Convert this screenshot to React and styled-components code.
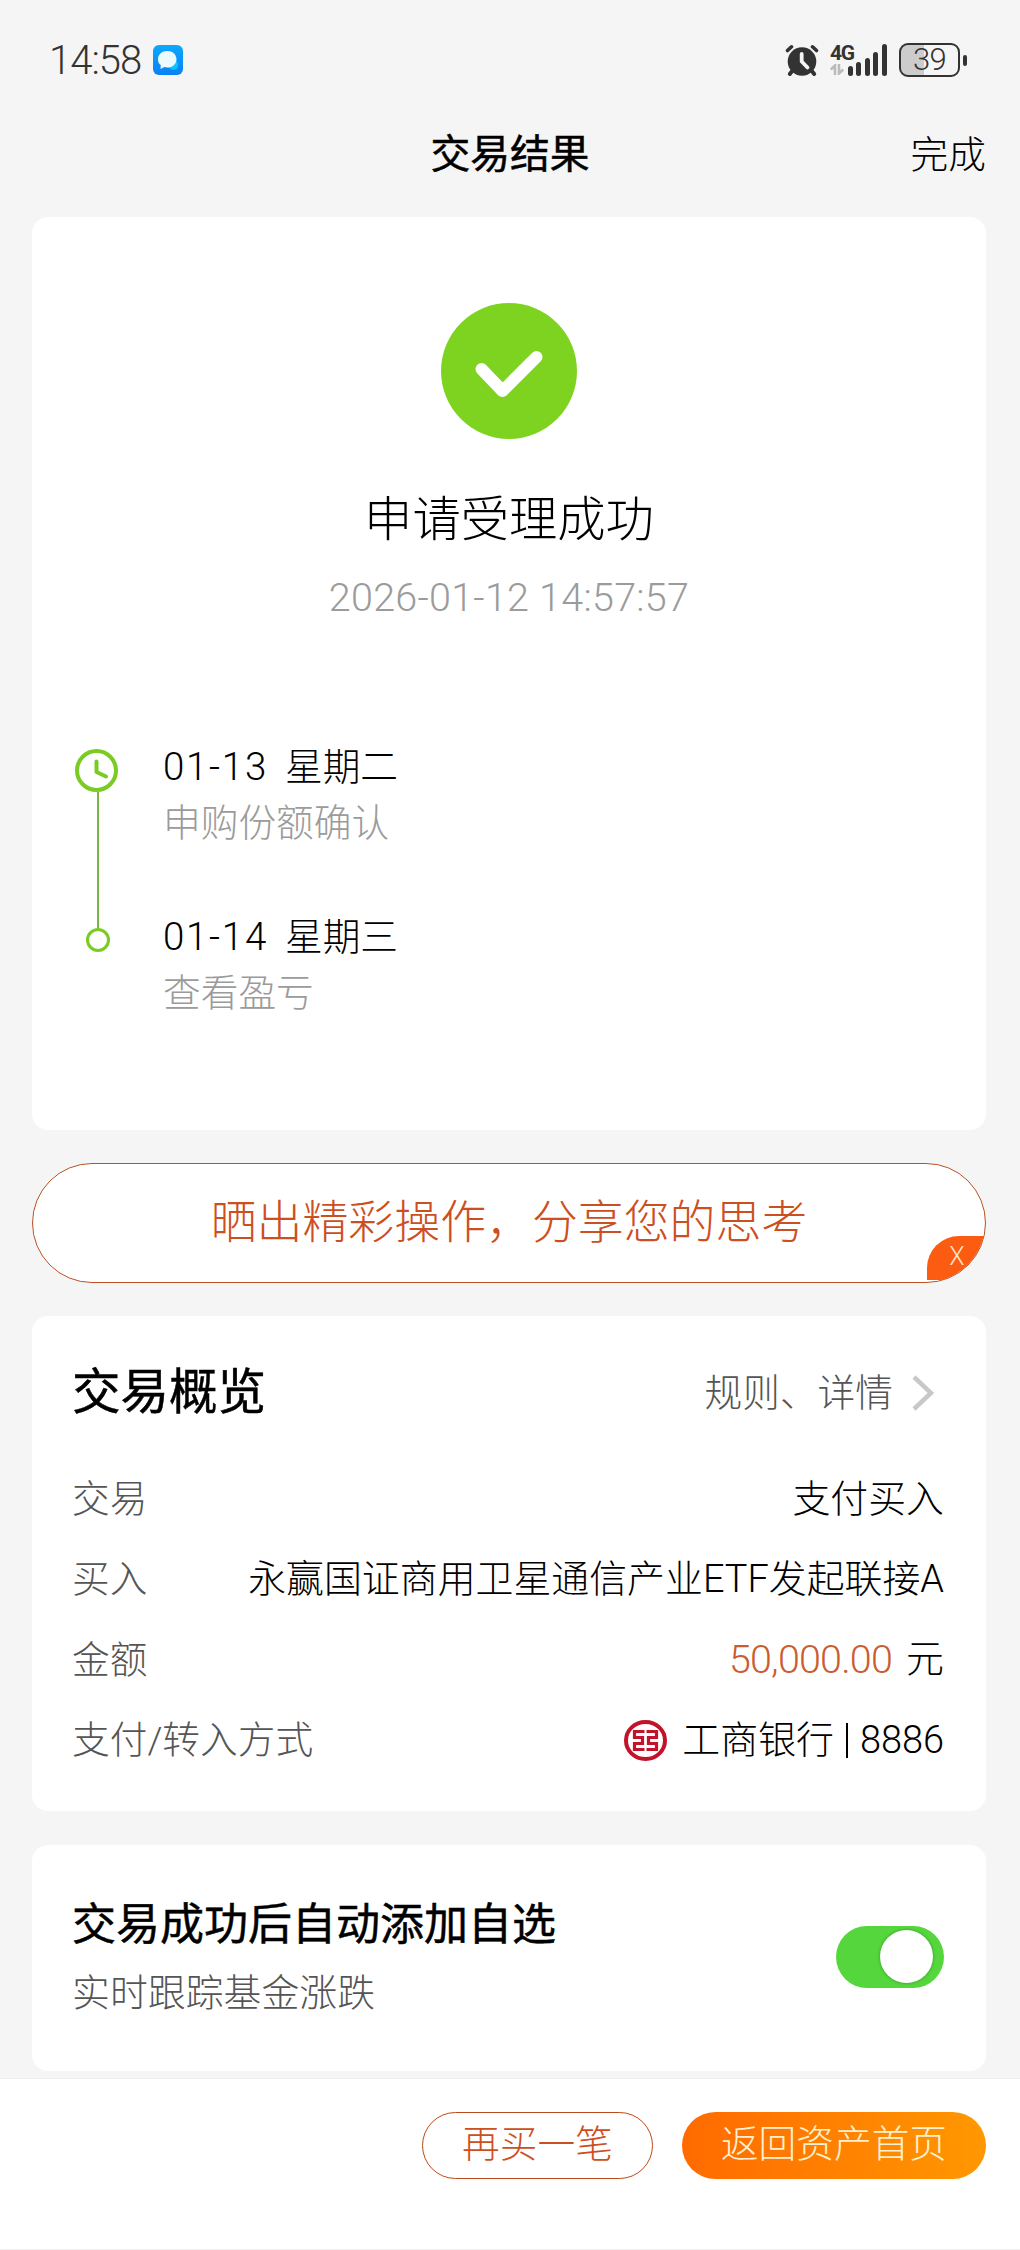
import React from 'react'
import styled, { createGlobalStyle } from 'styled-components'

const GlobalStyle = createGlobalStyle`
  * {
    box-sizing: border-box;
  }
  body {
    margin: 0;
    background: #f5f5f5;
    color: #000;
    font-family: Roboto, 'Noto Sans CJK SC', sans-serif;
    font-weight: 300;
    font-size: 37.7px;
    line-height: 1.4;
  }
`

const Page = styled.div`
  width: 1020px;
  height: 2250px;
  overflow: hidden;
  display: flex;
  flex-direction: column;
`

const StatusBar = styled.div`
  height: 117px;
  padding: 3px 53px 0 49px;
  display: flex;
  align-items: center;
  justify-content: space-between;
  color: #333;
`

const StatusGroup = styled.div`
  display: flex;
  align-items: center;
  gap: ${({ $gap }) => $gap || 0}px;
`

const Clock = styled.span`
  width: 93px;
  padding-top: 1px;
  font-size: 40px;
  line-height: 48px;
  letter-spacing: -1px;
  white-space: nowrap;
`

const Network = styled.div`
  display: flex;
  flex-direction: column;
  width: 22px;
  height: 33px;
  margin-left: 11px;
`

const NetworkLabel = styled.span`
  font-weight: 700;
  font-size: 21px;
  line-height: 18px;
  height: 20px;
  letter-spacing: -1.5px;
`

const Bars = styled.div`
  display: flex;
  align-items: flex-end;
  gap: 3.4px;
  height: 32px;
  margin-left: -4.6px;
`

const Bar = styled.span`
  width: 5.2px;
  height: ${({ $h }) => $h}px;
  border-radius: 3px;
  background: #333;
`

const Battery = styled.div`
  width: 61px;
  height: 34px;
  margin-left: 12px;
  border: 2px solid #333;
  border-radius: 9px;
  background: linear-gradient(90deg, #ccc 23px, transparent 23px);
  display: flex;
  align-items: center;
  justify-content: center;
  font-size: 31px;
  line-height: 30px;
  letter-spacing: -0.8px;
`

const BatteryTip = styled.span`
  width: 4px;
  height: 11px;
  margin-left: 3px;
  border-radius: 2px;
  background: #333;
`

const Header = styled.header`
  height: 100px;
  padding: 0 34px;
  display: grid;
  grid-template-columns: 1fr auto 1fr;
  align-items: start;
`

const HeaderTitle = styled.h1`
  grid-column: 2;
  margin: 0;
  font-size: 39.8px;
  font-weight: 400;
  -webkit-text-stroke: 0.5px #000;
  line-height: 75px;
`

const HeaderAction = styled.span`
  justify-self: end;
  line-height: 77px;
`

const Card = styled.section`
  margin: 0 34px 0 32px;
  height: ${({ $h }) => $h}px;
  flex: none;
  border-radius: 16px;
  background: #fff;
`

const ResultCard = styled(Card)`
  display: flex;
  flex-direction: column;
  align-items: center;
  padding-top: 86px;
`

const ResultText = styled.div`
  margin-top: 45px;
  font-size: 48.3px;
  line-height: 72px;
`

const ResultTime = styled.div`
  margin-top: 14px;
  font-size: 39.5px;
  line-height: 56px;
  letter-spacing: 0.25px;
  color: #9b9b9b;
`

const Timeline = styled.div`
  align-self: stretch;
  display: flex;
  margin-top: 113px;
  padding-left: 42px;
`

const Track = styled.svg`
  margin-top: 7px;
`

const Steps = styled.div`
  display: flex;
  flex-direction: column;
  gap: 58px;
  margin-left: 43px;
`

const Step = styled.div`
  line-height: 56px;
`

const StepDate = styled.div`
  display: flex;
  gap: 17px;
`

const Day = styled.span`
  font-size: 38.5px;
  letter-spacing: 1.7px;
`

const StepNote = styled.div`
  color: #9b9b9b;
`

const ShareBanner = styled.div`
  position: relative;
  overflow: hidden;
  flex: none;
  height: 120px;
  margin: 33px 34px 33px 32px;
  padding-bottom: 2px;
  border: 1px solid #bb5123;
  border-radius: 60px;
  background: #fff;
  color: #cc4f22;
  font-size: 45.9px;
  display: flex;
  align-items: center;
  justify-content: center;
`

const CloseBadge = styled.span`
  position: absolute;
  right: 0;
  bottom: 2px;
  width: 58px;
  height: 44px;
  padding-left: 2px;
  border-top-left-radius: 32px;
  background: #fb5c12;
  color: #ffe3c8;
  font-size: 25px;
  line-height: 42px;
  text-align: center;
`

const OverviewCard = styled(Card)`
  padding: 37px 42px 0 40px;
`

const OverviewHead = styled.div`
  display: flex;
  justify-content: space-between;
  align-items: center;
  height: 80px;
  margin-bottom: 26px;
`

const CardTitle = styled.h2`
  margin: 0;
  font-weight: 400;
  -webkit-text-stroke: 0.5px #000;
  font-size: ${({ $size }) => $size}px;
  line-height: 64px;
`

const DetailLink = styled.div`
  display: flex;
  align-items: center;
  gap: 19px;
  padding-right: 10px;
  color: #555;
`

const Row = styled.div`
  display: flex;
  justify-content: space-between;
  align-items: center;
  height: 80.4px;
  white-space: nowrap;
`

const Label = styled.span`
  color: #555;
`

const Value = styled.span`
  display: flex;
  align-items: center;
  font-size: 37.9px;
`

const Amount = styled.span`
  margin-right: 14px;
  color: #cc5c2e;
  font-size: 39.5px;
  letter-spacing: -0.8px;
`

const BankName = styled.span`
  margin-left: 15px;
`

const Divider = styled.span`
  width: 2px;
  height: 35px;
  margin: 0 12px;
  background: #000;
`

const WatchCard = styled(Card)`
  margin-top: 34px;
  padding: 0 42px 3px 40px;
  display: flex;
  justify-content: space-between;
  align-items: center;
`

const WatchText = styled.div`
  display: flex;
  flex-direction: column;
  gap: 8px;
  padding-top: 5px;
  line-height: 60px;
  font-size: 37.9px;
  color: #555;

  h2 {
    color: #000;
    line-height: 60px;
  }
`

const Toggle = styled.button`
  width: 108px;
  height: 62px;
  padding: 0 11px 0 0;
  border: 0;
  border-radius: 31px;
  background: #55d63c;
  display: flex;
  align-items: center;
  justify-content: flex-end;
`

const Knob = styled.span`
  width: 53px;
  height: 53px;
  border-radius: 50%;
  background: #fff;
  box-shadow: 0 0 3px rgba(0, 80, 0, 0.5);
`

const Footer = styled.footer`
  flex: 1;
  margin-top: 7px;
  padding: 33px 34px 0 0;
  border-top: 1px solid #ececec;
  border-bottom: 1px solid #f0f0f0;
  background: #fff;
  display: flex;
  justify-content: flex-end;
  align-items: flex-start;
  gap: 29px;
`

const Button = styled.button`
  height: 67px;
  width: ${({ $w }) => $w}px;
  padding: 0 0 4px;
  border: ${({ $primary }) => ($primary ? '0' : '1px solid #bb4a1e')};
  border-radius: 34px;
  background: ${({ $primary }) => ($primary ? 'linear-gradient(90deg, #ff6a00, #ff9800)' : '#fff')};
  color: ${({ $primary }) => ($primary ? '#fff0cf' : '#cc4f22')};
  font: inherit;
  line-height: 56px;
`

const rows = [
  { label: '交易', value: '支付买入' },
  { label: '买入', value: '永赢国证商用卫星通信产业ETF发起联接A' },
]

function MessageIcon() {
  return (
    <svg width="30" height="30" viewBox="0 0 30 30">
      <defs>
        <linearGradient id="msg" x1="0" y1="0" x2="0" y2="1">
          <stop offset="0" stopColor="#0ba9fb" />
          <stop offset="1" stopColor="#0a80f5" />
        </linearGradient>
      </defs>
      <rect width="30" height="30" rx="6" fill="url(#msg)" />
      <circle cx="20.5" cy="20" r="4.8" fill="#0bc4fb" />
      <path
        d="M14.3 6c5.2 0 9.2 3.4 9.2 8.2s-4 8.3-9.2 8.3c-1 0-2-.1-2.900-.4L7.500 24l.3-3.800C6 18.800 5 16.700 5 14.200 5 9.400 9.100 6 14.300 6z"
        fill="#eafaff"
      />
    </svg>
  )
}

function AlarmIcon() {
  return (
    <svg width="34" height="33" viewBox="0 0 34 33" fill="none" stroke="#333" strokeLinecap="round">
      <path d="M2.5 6.5 6.500 2.800M31.500 6.500 27.500 2.800" strokeWidth="3.6" />
      <path d="M8 26 4.800 30M26 26 29.200 30" strokeWidth="4" />
      <circle cx="17" cy="17.5" r="14.3" fill="#333" stroke="none" />
      <path d="M16.700 10v7.500l5.800 6" stroke="#f5f5f5" strokeWidth="3.8" strokeLinejoin="round" />
    </svg>
  )
}

function DataArrows() {
  return (
    <svg width="14" height="11" viewBox="0 0 14 11" fill="none" stroke="#bbb" strokeWidth="2.6">
      <path d="M5 11V1.500L.8 5.500M9 0v9.500l4.200-4" />
    </svg>
  )
}

function SuccessIcon() {
  return (
    <svg width="136" height="136" viewBox="0 0 136 136">
      <circle cx="68" cy="68" r="68" fill="#7ed321" />
      <path
        d="M40.500 66 61.500 88 95.500 54"
        fill="none"
        stroke="#fff"
        strokeWidth="12"
        strokeLinecap="round"
        strokeLinejoin="round"
      />
    </svg>
  )
}

function TimelineTrack() {
  return (
    <Track width="46" height="210" viewBox="0 0 46 210" fill="none" stroke="#7acb22">
      <path d="M24 46V184" strokeWidth="2" stroke="#77b545" />
      <circle cx="22.5" cy="24.5" r="19.5" strokeWidth="4" />
      <path d="M22.500 15.500v10.500l9.500 4.500" strokeWidth="4" strokeLinecap="round" strokeLinejoin="round" />
      <circle cx="24" cy="194" r="10.5" strokeWidth="3" />
    </Track>
  )
}

function Chevron() {
  return (
    <svg width="22" height="36" viewBox="0 0 22 36" fill="none" stroke="#c8c8c8" strokeWidth="4.5">
      <path d="M2 2 19 18 2 34" />
    </svg>
  )
}

function BankIcon() {
  return (
    <svg width="43" height="41" viewBox="0 0 43 41" fill="none" stroke="#c2132a">
      <ellipse cx="21.5" cy="20.5" rx="19.5" ry="18.5" strokeWidth="4" />
      <path
        d="M20.500 11.500H10.500V17.500H18.500V23.500H10.500V29.500H20.500M22.500 11.500H32.500V17.500H24.500V23.500H32.500V29.500H22.500"
        strokeWidth="3.2"
      />
    </svg>
  )
}

export default function App() {
  return (
    <Page>
      <GlobalStyle />
      <StatusBar>
        <StatusGroup $gap={11}>
          <Clock>14:58</Clock>
          <MessageIcon />
        </StatusGroup>
        <StatusGroup>
          <AlarmIcon />
          <Network>
            <NetworkLabel>4G</NetworkLabel>
            <DataArrows />
          </Network>
          <Bars>
            {[10, 14, 18, 24, 32].map((h) => (
              <Bar key={h} $h={h} />
            ))}
          </Bars>
          <Battery>39</Battery>
          <BatteryTip />
        </StatusGroup>
      </StatusBar>

      <Header>
        <HeaderTitle>交易结果</HeaderTitle>
        <HeaderAction>完成</HeaderAction>
      </Header>

      <ResultCard $h={913}>
        <SuccessIcon />
        <ResultText>申请受理成功</ResultText>
        <ResultTime>2026-01-12 14:57:57</ResultTime>
        <Timeline>
          <TimelineTrack />
          <Steps>
            <Step>
              <StepDate>
                <Day>01-13</Day>
                <span>星期二</span>
              </StepDate>
              <StepNote>申购份额确认</StepNote>
            </Step>
            <Step>
              <StepDate>
                <Day>01-14</Day>
                <span>星期三</span>
              </StepDate>
              <StepNote>查看盈亏</StepNote>
            </Step>
          </Steps>
        </Timeline>
      </ResultCard>

      <ShareBanner>
        晒出精彩操作，分享您的思考
        <CloseBadge>X</CloseBadge>
      </ShareBanner>

      <OverviewCard $h={495}>
        <OverviewHead>
          <CardTitle $size={48.5}>交易概览</CardTitle>
          <DetailLink>
            规则、详情
            <Chevron />
          </DetailLink>
        </OverviewHead>
        {rows.map((row) => (
          <Row key={row.label}>
            <Label>{row.label}</Label>
            <Value>{row.value}</Value>
          </Row>
        ))}
        <Row>
          <Label>金额</Label>
          <Value>
            <Amount>50,000.00</Amount>元
          </Value>
        </Row>
        <Row>
          <Label>支付/转入方式</Label>
          <Value>
            <BankIcon />
            <BankName>工商银行</BankName>
            <Divider />
            8886
          </Value>
        </Row>
      </OverviewCard>

      <WatchCard $h={226}>
        <WatchText>
          <CardTitle $size={44}>交易成功后自动添加自选</CardTitle>
          <span>实时跟踪基金涨跌</span>
        </WatchText>
        <Toggle>
          <Knob />
        </Toggle>
      </WatchCard>

      <Footer>
        <Button $w={231}>再买一笔</Button>
        <Button $w={304} $primary>
          返回资产首页
        </Button>
      </Footer>
    </Page>
  )
}
